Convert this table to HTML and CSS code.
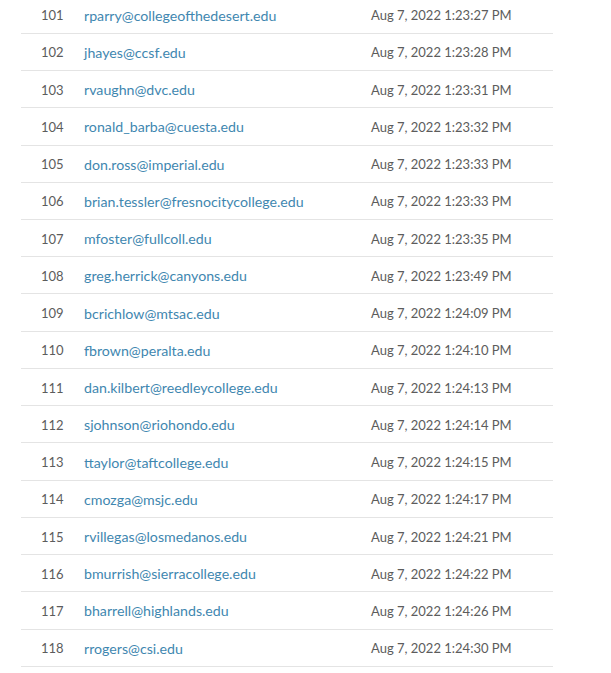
FILE: index.html
```html
<!DOCTYPE html>
<html>
<head>
<meta charset="utf-8">
<link rel="stylesheet" href="styles.css">
</head>
<body>
<div class="table">
  <div class="row"><span class="num">101</span><a class="email">rparry@collegeofthedesert.edu</a><span class="date">Aug 7, 2022 1:23:27 PM</span></div>
  <div class="row"><span class="num">102</span><a class="email">jhayes@ccsf.edu</a><span class="date">Aug 7, 2022 1:23:28 PM</span></div>
  <div class="row"><span class="num">103</span><a class="email">rvaughn@dvc.edu</a><span class="date">Aug 7, 2022 1:23:31 PM</span></div>
  <div class="row"><span class="num">104</span><a class="email">ronald_barba@cuesta.edu</a><span class="date">Aug 7, 2022 1:23:32 PM</span></div>
  <div class="row"><span class="num">105</span><a class="email">don.ross@imperial.edu</a><span class="date">Aug 7, 2022 1:23:33 PM</span></div>
  <div class="row"><span class="num">106</span><a class="email">brian.tessler@fresnocitycollege.edu</a><span class="date">Aug 7, 2022 1:23:33 PM</span></div>
  <div class="row"><span class="num">107</span><a class="email">mfoster@fullcoll.edu</a><span class="date">Aug 7, 2022 1:23:35 PM</span></div>
  <div class="row"><span class="num">108</span><a class="email">greg.herrick@canyons.edu</a><span class="date">Aug 7, 2022 1:23:49 PM</span></div>
  <div class="row"><span class="num">109</span><a class="email">bcrichlow@mtsac.edu</a><span class="date">Aug 7, 2022 1:24:09 PM</span></div>
  <div class="row"><span class="num">110</span><a class="email">fbrown@peralta.edu</a><span class="date">Aug 7, 2022 1:24:10 PM</span></div>
  <div class="row"><span class="num">111</span><a class="email">dan.kilbert@reedleycollege.edu</a><span class="date">Aug 7, 2022 1:24:13 PM</span></div>
  <div class="row"><span class="num">112</span><a class="email">sjohnson@riohondo.edu</a><span class="date">Aug 7, 2022 1:24:14 PM</span></div>
  <div class="row"><span class="num">113</span><a class="email">ttaylor@taftcollege.edu</a><span class="date">Aug 7, 2022 1:24:15 PM</span></div>
  <div class="row"><span class="num">114</span><a class="email">cmozga@msjc.edu</a><span class="date">Aug 7, 2022 1:24:17 PM</span></div>
  <div class="row"><span class="num">115</span><a class="email">rvillegas@losmedanos.edu</a><span class="date">Aug 7, 2022 1:24:21 PM</span></div>
  <div class="row"><span class="num">116</span><a class="email">bmurrish@sierracollege.edu</a><span class="date">Aug 7, 2022 1:24:22 PM</span></div>
  <div class="row"><span class="num">117</span><a class="email">bharrell@highlands.edu</a><span class="date">Aug 7, 2022 1:24:26 PM</span></div>
  <div class="row"><span class="num">118</span><a class="email">rrogers@csi.edu</a><span class="date">Aug 7, 2022 1:24:30 PM</span></div>
</div>
</body>
</html>
```

FILE: styles.css
```css
html, body {
  margin: 0;
  padding: 0;
  background: #ffffff;
}

body {
  font-family: Lato, "Liberation Sans", sans-serif;
  font-size: 14px;
  color: #5c5c5c;
}

.table {
  margin: -3.4px 0 0 21px;
  width: 532px;
}

.row {
  box-sizing: border-box;
  height: 37.24px;
  display: grid;
  grid-template-columns: 43px 287px 1fr;
  align-items: center;
  border-bottom: 1px solid #e4e4e4;
  padding-left: 20px;
  padding-top: 1px;
}

.num {
  color: #5c5c5c;
  font-size: 13px;
}

.email {
  color: #3f87b0;
  font-size: 14.2px;
  text-decoration: none;
}

.date {
  color: #5c5c5c;
  font-size: 13px;
}
```
